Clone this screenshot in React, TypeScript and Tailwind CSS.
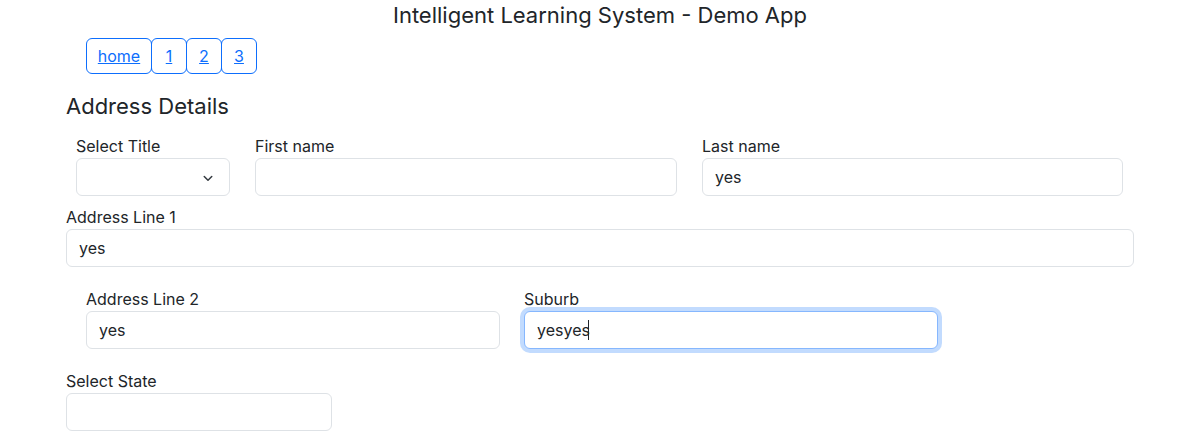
import { useEffect, useRef } from 'react'

const inputBase =
  'block w-full h-[38px] px-3 rounded-md border border-[#dee2e6] bg-white text-[16px] text-[#212529] outline-none'

function Field({ label, value, className = '' }: { label: string; value?: string; className?: string }) {
  return (
    <div className={className}>
      <label className="block text-[16px] leading-6 text-[#212529] mb-0">{label}</label>
      <input className={inputBase} defaultValue={value} readOnly />
    </div>
  )
}

export default function App() {
  const suburbRef = useRef<HTMLInputElement>(null)

  useEffect(() => {
    const el = suburbRef.current
    if (el) {
      el.focus()
      el.setSelectionRange(el.value.length, el.value.length)
    }
  }, [])

  return (
    <div className="min-h-screen bg-white text-[#212529]" style={{ fontFamily: 'Inter, "Noto Sans", sans-serif' }}>
      <h1 className="text-center text-[22px] leading-[30px] font-normal">Intelligent Learning System - Demo App</h1>

      <div className="w-[1068px] mx-auto">
        <nav className="flex pl-5 mt-[8px]">
          {['home', '1', '2', '3'].map((item) => (
            <a
              key={item}
              href="#"
              className={`h-9 flex items-center justify-center rounded-md border border-[#0d6efd] text-[#0d6efd] underline text-[16px] ${
                item === 'home' ? 'w-[66px]' : 'w-[36px] -ml-px'
              }`}
            >
              {item}
            </a>
          ))}
        </nav>

        <h4 className="text-[22px] leading-6 mt-[20px] mb-[16px] font-normal">Address Details</h4>

        <div className="flex gap-[25px] px-[10px]">
          <div className="w-[154px]">
            <label className="block text-[16px] leading-6">Select Title</label>
            <div className={`${inputBase} relative`}>
              <svg
                className="absolute right-[15px] top-[13px] w-[12px] h-[12px]"
                viewBox="0 0 16 16"
                fill="none"
                stroke="#343a40"
                strokeWidth={2}
                strokeLinecap="round"
                strokeLinejoin="round"
              >
                <path d="M3 6l5 5 5-5" />
              </svg>
            </div>
          </div>
          <Field label="First name" className="w-[422px]" />
          <Field label="Last name" value="yes" className="w-[421px]" />
        </div>

        <Field label="Address Line 1" value="yes" className="mt-[9px]" />

        <div className="flex gap-6 px-5 mt-[20px]">
          <Field label="Address Line 2" value="yes" className="w-[414px]" />
          <div className="w-[414px]">
            <label className="block text-[16px] leading-6">Suburb</label>
            <div className="relative">
              <input
                ref={suburbRef}
                defaultValue="yesyes"
                className="block w-full h-[38px] px-3 rounded-md border border-[#86b7fe] bg-white text-[16px] text-[#212529] outline-none caret-transparent shadow-[0_0_0_4px_rgba(13,110,253,0.25)]"
              />
              <span className="absolute left-[64px] top-[9px] w-px h-5 bg-[#212529]" />
            </div>
          </div>
        </div>

        <Field label="Select State" className="w-[266px] mt-[20px]" />
      </div>
    </div>
  )
}
